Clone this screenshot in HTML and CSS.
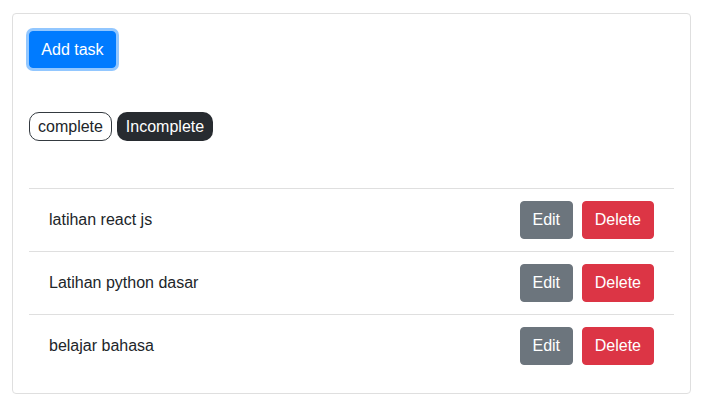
FILE: index.html
```html
<!DOCTYPE html>
<html>
<head>
<meta charset="utf-8">
<link rel="stylesheet" href="styles.css">
</head>
<body>
<div class="card">
  <div class="card-body">
    <div class="top">
      <button class="btn btn-primary focus">Add task</button>
    </div>
    <div class="filters">
      <span class="badge badge-outline">complete</span>
      <span class="badge badge-dark">Incomplete</span>
    </div>
    <ul class="list">
      <li class="item">
        <span class="item-text">latihan react js</span>
        <div class="actions">
          <button class="btn btn-secondary">Edit</button>
          <button class="btn btn-danger">Delete</button>
        </div>
      </li>
      <li class="item">
        <span class="item-text">Latihan python dasar</span>
        <div class="actions">
          <button class="btn btn-secondary">Edit</button>
          <button class="btn btn-danger">Delete</button>
        </div>
      </li>
      <li class="item">
        <span class="item-text">belajar bahasa</span>
        <div class="actions">
          <button class="btn btn-secondary">Edit</button>
          <button class="btn btn-danger">Delete</button>
        </div>
      </li>
    </ul>
  </div>
</div>
</body>
</html>
```

FILE: styles.css
```css
* { box-sizing: border-box; }
body {
  margin: 0;
  padding: 13px 14px 0 12px;
  font-family: "Liberation Sans", Arial, sans-serif;
  font-size: 16px;
  line-height: 1.5;
  color: #212529;
  background: #fff;
}
.card {
  border: 1px solid #dfdfdf;
  border-radius: 4px;
  width: 679px;
}
.card-body {
  padding: 16px;
}
.top {
  display: flex;
}
.btn {
  font-family: inherit;
  font-size: 16px;
  line-height: 24px;
  padding: 6px 12px;
  border: 1px solid transparent;
  border-radius: 4px;
  color: #fff;
  cursor: pointer;
}
.btn-primary { background: #007bff; border-color: #007bff; }
.btn-primary.focus { box-shadow: 0 0 0 3px rgba(38, 143, 255, 0.5); height: 37px; width: 87px; padding: 0; margin-top: 1px; }
.btn-secondary { background: #6c757d; border-color: #6c757d; }
.btn-danger { background: #dc3545; border-color: #dc3545; }
.filters {
  display: flex;
  gap: 5px;
  margin-top: 44px;
}
.badge {
  display: inline-flex;
  align-items: center;
  height: 29px;
  padding: 0 8px;
  border-radius: 10px;
  font-size: 16px;
  line-height: 1;
}
.badge-outline {
  border: 1px solid #343a40;
  color: #212529;
  background: #fff;
  width: 83px;
  justify-content: center;
}
.badge-dark {
  background: #272b30;
  color: #fff;
  width: 96px;
  justify-content: center;
}
.list {
  list-style: none;
  margin: 47px 0 0;
  padding: 0;
}
.item {
  display: flex;
  align-items: center;
  justify-content: space-between;
  padding: 12px 20px;
  border-top: 1px solid #dfdfdf;
}
.item-text {
  font-size: 16px;
}
.actions {
  display: flex;
  gap: 9px;
}
.actions .btn { height: 38px; }
.actions .btn-secondary { width: 53px; padding: 0; }
```
